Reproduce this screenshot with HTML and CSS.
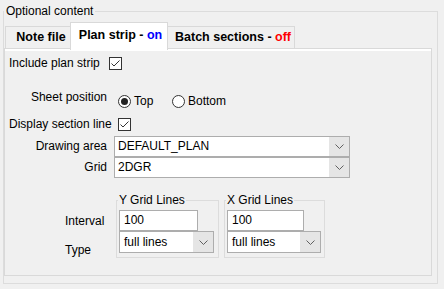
FILE: index.html
```html
<!DOCTYPE html>
<html>
    <head>
        <title>Optional content</title>
        <link rel="stylesheet" href="styles.css">
    </head>
    <body>
        <fieldset class="content">
            <legend>Optional content</legend>
            <div class="tabs">
                <div class="tab note">Note file</div>
                <div class="tab plan active">Plan strip - <span class="on">on</span></div>
                <div class="tab batch">Batch sections - <span class="off">off</span></div>
            </div>
            <div class="pane">
                <div class="row include">
                    <span class="label">Include plan strip</span>
                    <svg class="check" width="13" height="13" viewBox="0 0 13 13"><rect x="0.5" y="0.5" width="12" height="12" fill="#fff" stroke="#333"/><path d="M2.5 6.5 L5 9 L10.5 3.5" fill="none" stroke="#333"/></svg>
                </div>
                <div class="row sheet">
                    <span class="label right">Sheet position</span>
                    <div class="radios">
                        <div class="option top">
                            <svg width="13" height="13" viewBox="0 0 13 13"><circle cx="6.5" cy="6.5" r="6" fill="#fff" stroke="#333"/><circle cx="6.5" cy="6.5" r="3.5" fill="#222"/></svg>
                            <span>Top</span>
                        </div>
                        <div class="option">
                            <svg width="13" height="13" viewBox="0 0 13 13"><circle cx="6.5" cy="6.5" r="6" fill="#fff" stroke="#333"/></svg>
                            <span>Bottom</span>
                        </div>
                    </div>
                </div>
                <div class="row display">
                    <span class="label">Display section line</span>
                    <svg class="check" width="13" height="13" viewBox="0 0 13 13"><rect x="0.5" y="0.5" width="12" height="12" fill="#fff" stroke="#333"/><path d="M2.5 6.5 L5 9 L10.5 3.5" fill="none" stroke="#333"/></svg>
                </div>
                <div class="row combo-row first">
                    <span class="label right">Drawing area</span>
                    <div class="combo wide">
                        <span class="value">DEFAULT_PLAN</span>
                        <span class="arrow"><svg width="9" height="5" viewBox="0 0 9 5"><path d="M0.5 0.5 L4.5 4.5 L8.5 0.5" fill="none" stroke="#606060"/></svg></span>
                    </div>
                </div>
                <div class="row combo-row">
                    <span class="label right">Grid</span>
                    <div class="combo wide">
                        <span class="value">2DGR</span>
                        <span class="arrow"><svg width="9" height="5" viewBox="0 0 9 5"><path d="M0.5 0.5 L4.5 4.5 L8.5 0.5" fill="none" stroke="#606060"/></svg></span>
                    </div>
                </div>
                <div class="grid-lines">
                    <div class="side">
                        <span class="interval">Interval</span>
                        <span class="type">Type</span>
                    </div>
                    <fieldset class="sub y">
                        <legend>Y Grid Lines</legend>
                        <div class="input">100</div>
                        <div class="combo small">
                            <span class="value">full lines</span>
                            <span class="arrow"><svg width="9" height="5" viewBox="0 0 9 5"><path d="M0.5 0.5 L4.5 4.5 L8.5 0.5" fill="none" stroke="#606060"/></svg></span>
                        </div>
                    </fieldset>
                    <fieldset class="sub x">
                        <legend>X Grid Lines</legend>
                        <div class="input">100</div>
                        <div class="combo small">
                            <span class="value">full lines</span>
                            <span class="arrow"><svg width="9" height="5" viewBox="0 0 9 5"><path d="M0.5 0.5 L4.5 4.5 L8.5 0.5" fill="none" stroke="#606060"/></svg></span>
                        </div>
                    </fieldset>
                </div>
            </div>
        </fieldset>
    </body>
</html>
```

FILE: styles.css
```css
* {
    box-sizing: border-box;
}
body {
    margin: 0;
    width: 444px;
    height: 289px;
    overflow: hidden;
    background: #f0f0f0;
    color: #000;
    font-family: "Liberation Sans", Arial, sans-serif;
    font-size: 12px;
    line-height: 15px;
}
legend {
    padding: 0 2px;
    line-height: 14px;
}
.content {
    margin: 4px 6px 0 3px;
    padding: 4px 0 7px 0;
    border: 1px solid #dcdcdc;
    min-width: 0;
    height: 280px;
}
.tabs {
    display: flex;
    align-items: flex-end;
    height: 26px;
    padding-left: 1px;
}
.tab {
    height: 22px;
    border: 1px solid #d9d9d9;
    border-bottom: 0;
    background: #f0f0f0;
    font-weight: bold;
    font-size: 12.5px;
    line-height: 21px;
    text-align: center;
    padding-left: 5px;
    white-space: nowrap;
}
.note {
    width: 67px;
}
.plan {
    width: 98px;
}
.batch {
    width: 129px;
}
.tab.active {
    position: relative;
    z-index: 1;
    height: 28px;
    margin: 0 -2px -2px;
    background: #fff;
    line-height: 25px;
    padding-left: 3px;
}
.on {
    color: #0000ff;
}
.off {
    color: #ff0000;
}
.pane {
    height: 228px;
    margin-right: 5px;
    border: 1px solid #d9d9d9;
    background: #f0f0f0;
    box-shadow: inset 0 2px #fff;
}
.row {
    display: flex;
    align-items: center;
    height: 15px;
    padding-left: 4px;
}
.label {
    flex: none;
    white-space: nowrap;
}
.label.right {
    width: 98px;
    text-align: right;
}
.include {
    margin-top: 7px;
}
.include .label {
    width: 100px;
}
.sheet {
    height: 19px;
    margin-top: 19px;
    align-items: flex-start;
}
.radios {
    display: flex;
    margin: 4px 0 0 11px;
}
.option {
    display: flex;
    align-items: center;
    gap: 3px;
    height: 15px;
}
.option.top {
    width: 54px;
}
.display {
    margin-top: 8px;
}
.display .label {
    width: 109px;
}
.combo-row {
    height: 21px;
}
.combo-row.first {
    margin-top: 4px;
}
.combo {
    display: flex;
    border: 1px solid #adadad;
    background: #fff;
}
.combo .value {
    flex: 1;
    padding-left: 3px;
    line-height: 19px;
    white-space: nowrap;
}
.arrow {
    width: 20px;
    display: flex;
    align-items: center;
    justify-content: center;
    background: #e5e5e5;
}
.combo.wide {
    width: 236px;
    height: 21px;
    margin-left: 7px;
}
.grid-lines {
    display: flex;
    margin-top: 15px;
    padding-left: 4px;
}
.side {
    width: 107px;
    padding-left: 56px;
    display: flex;
    flex-direction: column;
}
.interval {
    margin-top: 21px;
}
.type {
    margin-top: 14px;
}
.sub {
    margin: 0;
    padding: 3px 0 2px 2px;
    border: 1px solid #dcdcdc;
    min-width: 0;
}
.sub legend {
    margin-left: -1px;
    padding: 0 1px;
}
.sub.y {
    width: 103px;
}
.sub.x {
    width: 101px;
    margin-left: 5px;
}
.input {
    width: 79px;
    height: 21px;
    border: 1px solid #adadad;
    background: #fff;
    padding-left: 4px;
    line-height: 19px;
}
.combo.small {
    width: 95px;
    height: 22px;
}
.combo.small .value {
    padding-left: 4px;
    line-height: 20px;
}
.sub.x .combo.small {
    width: 94px;
}
.sub.x .input {
    width: 77px;
}
```
